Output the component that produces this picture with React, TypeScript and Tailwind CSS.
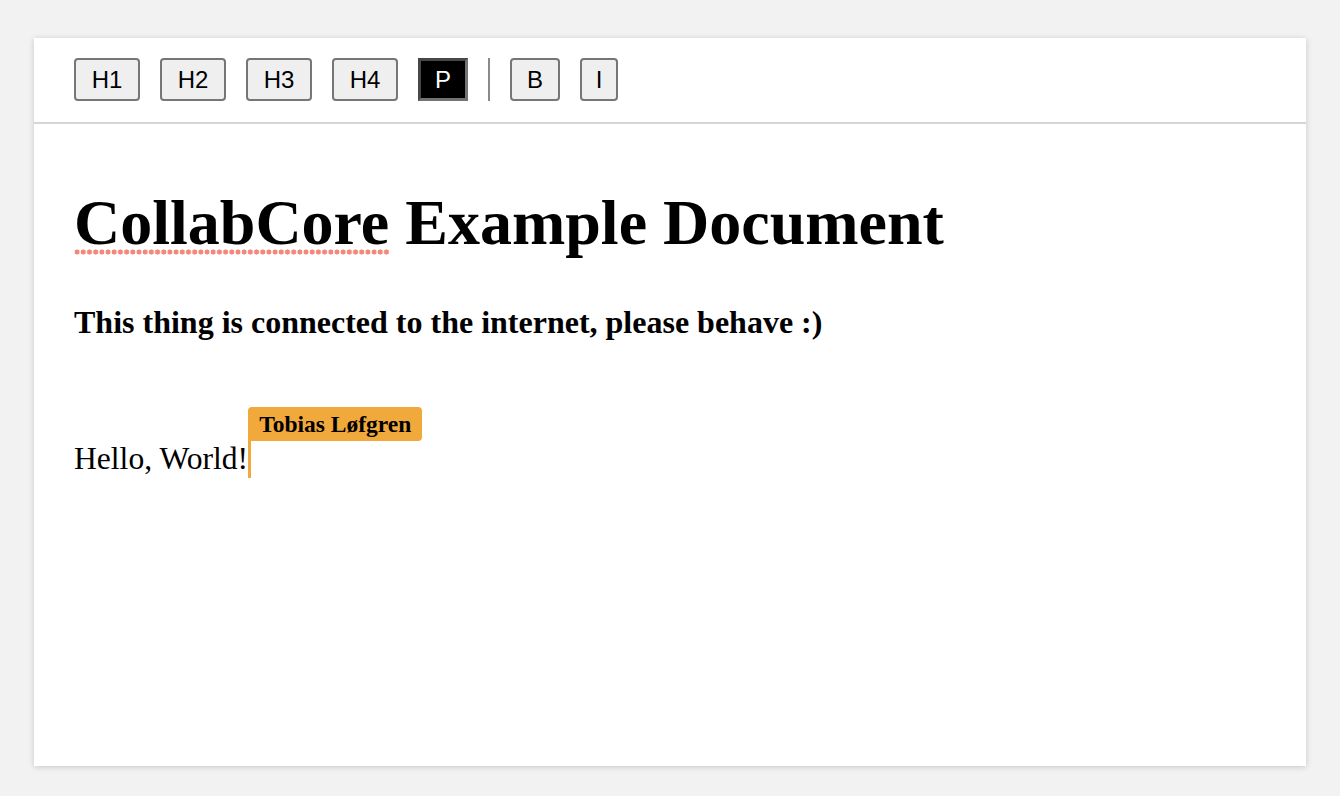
import React from 'react'

const serif = { fontFamily: '"Liberation Serif", "Times New Roman", serif' }

function ToolButton({ label, width, active }: { label: string; width: string; active?: boolean }) {
  return (
    <button
      className={
        (active
          ? 'bg-black text-white border-[3px] border-t-[#474747] border-l-[#474747] border-r-[#737373] border-b-[#737373] '
          : 'bg-[#efefef] text-black border-2 border-[#767676] rounded-[4px] ') +
        width +
        ' h-[43px] flex items-center justify-center text-[24px] leading-[27px]'
      }
      style={{ fontFamily: '"Liberation Sans", Arial, sans-serif' }}
    >
      {label}
    </button>
  )
}

export default function App() {
  return (
    <div className="min-h-[796px] bg-[#f2f2f2] pt-[38px] px-[34px]">
      <div className="h-[728px] bg-white shadow-[0_1px_6px_rgba(0,0,0,0.18)]">
        {/* toolbar */}
        <div className="flex items-center gap-[20px] px-[40px] pt-[20px] pb-[21px] border-b-2 border-[#d6d6d6]">
          <ToolButton label="H1" width="w-[66px]" />
          <ToolButton label="H2" width="w-[66px]" />
          <ToolButton label="H3" width="w-[66px]" />
          <ToolButton label="H4" width="w-[66px]" />
          <ToolButton label="P" width="w-[50px]" active />
          <div className="w-[2px] h-[43px] bg-[#8a8a8a]" />
          <ToolButton label="B" width="w-[50px]" />
          <ToolButton label="I" width="w-[38px]" />
        </div>

        {/* document */}
        <div className="px-[40px] pt-[62px]" style={serif}>
          <h1 className="text-[64px] font-bold leading-[1.15] text-black">
            <span className="bg-[radial-gradient(circle,#f3877a_2.3px,transparent_2.8px)] bg-[length:6.2px_6px] bg-repeat-x bg-[position:0_calc(100%-3px)]">
              CollabCore
            </span>{' '}
            Example Document
          </h1>
          <h2 className="mt-[44px] text-[32px] font-bold leading-[1.15] text-black">
            This thing is connected to the internet, please behave :)
          </h2>
          <p className="mt-[101px] text-[31.6px] leading-[1.15] text-black">
            Hello, World!
            <span className="relative inline-block w-[3px] h-[37px] align-top bg-[#f2a93b]">
              <span className="absolute left-0 bottom-full whitespace-nowrap bg-[#f2a93b] rounded-t-[4px] rounded-br-[4px] px-[11px] h-[34px] flex items-center text-[23.5px] font-bold text-black">
                Tobias Løfgren
              </span>
            </span>
          </p>
        </div>
      </div>
    </div>
  )
}
